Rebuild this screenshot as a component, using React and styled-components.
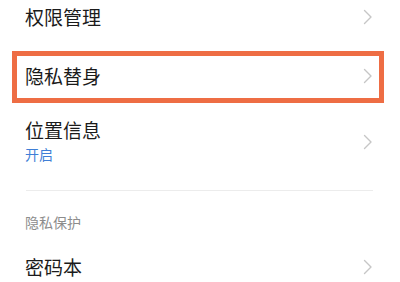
import React from "react"
import styled, { createGlobalStyle } from "styled-components"

const GlobalStyle = createGlobalStyle`
  html, body {
    margin: 0;
    padding: 0;
    background: #ffffff;
  }
  body {
    width: 400px;
    height: 282px;
    overflow: hidden;
    font-family: "Noto Sans CJK SC", "Noto Sans", sans-serif;
    -webkit-font-smoothing: antialiased;
  }
`

const Page = styled.div`
  width: 400px;
  height: 282px;
  overflow: hidden;
  background: #ffffff;
`

const List = styled.div`
  display: flex;
  flex-direction: column;
  margin-top: -13px;
`

const Row = styled.div`
  position: relative;
  display: flex;
  align-items: center;
  justify-content: space-between;
  box-sizing: border-box;
  height: ${(p) => (p.$tall ? "auto" : "59px")};
  padding: ${(p) => (p.$tall ? "13px 27px 25px 25px" : "0 27px 0 25px")};

  ${(p) =>
    p.$highlight &&
    `
    &::after {
      content: "";
      position: absolute;
      left: 12px;
      right: 16px;
      top: 5px;
      bottom: 2px;
      border: 5px solid #ee6d44;
      pointer-events: none;
    }
  `}
`

const Texts = styled.div`
  display: flex;
  flex-direction: column;
`

const Title = styled.span`
  font-size: 19px;
  line-height: 24px;
  color: #1b1b1b;
`

const Sub = styled.span`
  font-size: 14px;
  line-height: 22px;
  margin-top: 1px;
  color: #3f7fd6;
`

const Divider = styled.div`
  height: 1px;
  margin: 0 27px 0 26px;
  background: #ececec;
`

const SectionHeader = styled.div`
  padding: 22px 25px 6px;
  font-size: 14px;
  line-height: 18px;
  color: #8c8c8c;
`

function Chevron() {
  return (
    <svg width="10" height="16" viewBox="0 0 10 16" fill="none">
      <polyline
        points="1.5,1.5 8,8 1.5,14.5"
        stroke="#c6c6c6"
        strokeWidth="1.4"
        strokeLinecap="round"
        strokeLinejoin="round"
      />
    </svg>
  )
}

function Item({ title, sub, highlight }) {
  return (
    <Row $tall={!!sub} $highlight={highlight}>
      <Texts>
        <Title>{title}</Title>
        {sub && <Sub>{sub}</Sub>}
      </Texts>
      <Chevron />
    </Row>
  )
}

export default function App() {
  return (
    <Page>
      <GlobalStyle />
      <List>
        <Item title="权限管理" />
        <Item title="隐私替身" highlight />
        <Item title="位置信息" sub="开启" />
        <Divider />
        <SectionHeader>隐私保护</SectionHeader>
        <Item title="密码本" />
      </List>
    </Page>
  )
}
